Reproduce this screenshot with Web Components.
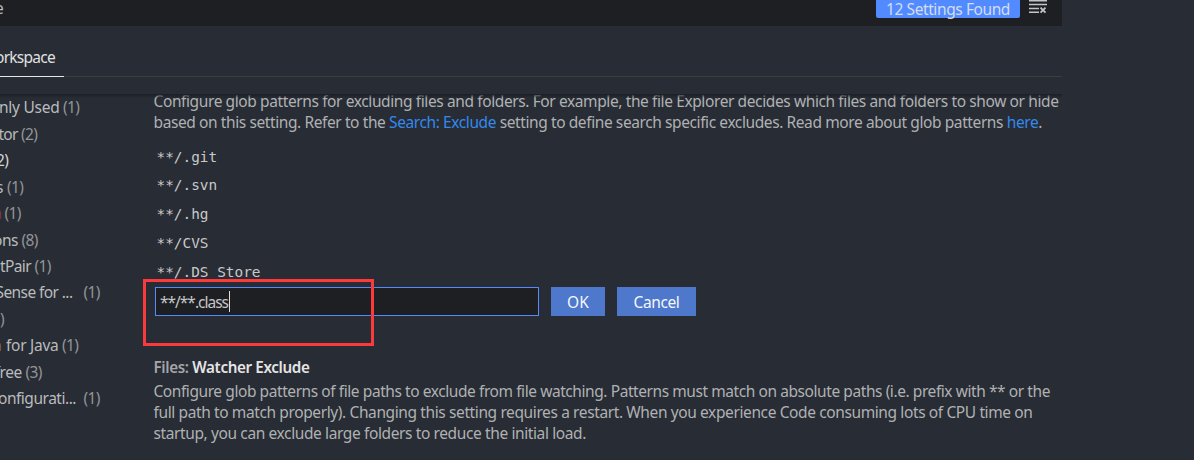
<!DOCTYPE html>
<html lang="en">
<head>
<meta charset="utf-8">
<title>Settings</title>
<style>
html,body{margin:0;height:100%;overflow:hidden;background:#282c34}
body{font:15.5px/21px "Noto Sans","Open Sans",sans-serif;color:#afb1b3}
</style>
</head>
<body>
<settings-editor></settings-editor>
<script>
function define(name, html, init) {
  const t = document.createElement('template');
  t.innerHTML = html;
  customElements.define(name, class extends HTMLElement {
    connectedCallback() {
      if (this.shadowRoot) return;
      this.attachShadow({mode: 'open'}).append(t.content.cloneNode(true));
      if (init) init.call(this, this.shadowRoot);
    }
  });
}

// One line of text, tracked to fill the width given in its attribute
define('text-run', `<style>:host{display:inline-block;white-space:nowrap;flex:none}</style><slot></slot>`, function () {
  const target = parseFloat(this.getAttribute('width'));
  const natural = this.getBoundingClientRect().width;
  if (target && natural) this.style.letterSpacing = ((target - natural) / this.textContent.length).toFixed(4) + 'px';
});

define('search-bar', `<style>
:host{display:flex;height:26px;background:#1d1f23;align-items:flex-start;color:#bbbdc0}
.query{flex:1;margin:-2px 0 0 -5px}
.badge{box-sizing:border-box;width:144px;height:18px;background:#528bff;color:#d3dcf0;border-radius:0 0 2px 2px;padding-left:10px;line-height:18px}
svg{margin:0 15px 0 9px;display:block}
</style>
<span class="query">e</span>
<span class="badge"><text-run width="124">12 Settings Found</text-run></span>
<svg width="18" height="14" viewBox="0 0 18 14" fill="none" stroke="#c5c5c5" stroke-width="1.5">
<path d="M0 .8h18M0 4.6h18M0 8.4h10M0 12.3h10"/><path stroke-width="1.8" d="M11.5 7.6l5 5M16.5 7.6l-5 5"/></svg>`);

define('scope-tabs', `<style>
:host{display:flex;box-sizing:border-box;height:51px;border-bottom:1px solid #3c3d3d}
.tab{display:flex;box-sizing:border-box;width:64px;height:51px;justify-content:flex-end;padding:21px 9px 0 0;border-bottom:1px solid #e7e7e7;color:#e0e1e2}
</style><div class="tab"><text-run width="60">orkspace</text-run></div>`);

define('toc-row', `<style>
:host{display:flex;height:26.45px;line-height:26.45px;white-space:nowrap;color:#b9bbbd}
.label{display:flex;justify-content:flex-end;flex:none;box-sizing:border-box;width:var(--end)}
.count{color:var(--count,#929598);width:19px;flex:none}
</style><span class="label"><slot></slot></span><span class="count"><text-run></text-run></span>`, function (root) {
  this.style.setProperty('--end', this.getAttribute('end') + 'px');
  const c = root.querySelector('text-run');
  c.textContent = this.getAttribute('count');
  c.style.letterSpacing = '-.6px';
  c.style.marginLeft = this.getAttribute('gap') + 'px';
});

define('pattern-row', `<style>
:host{display:block;height:28.75px;line-height:29.5px;padding-left:3.5px;font-family:"DejaVu Sans Mono",monospace;font-size:14.4px;color:#c8c9ca;white-space:pre}
</style><slot></slot>`);

define('push-button', `<style>
:host{display:flex;align-items:center;justify-content:center;height:29px;background:#4d78cc;color:#f5f7fb;box-sizing:border-box;padding-top:2px}
</style><slot></slot>`);

define('pattern-editor', `<style>
:host{display:flex;gap:12px;position:relative;margin:.75px 0 0 2px}
.input{display:flex;align-items:center;box-sizing:border-box;width:384px;height:29px;border:1px solid #528bff;background:#1d1f23;color:#c5c6c7;padding-left:4px}
.input text-run{padding-top:2px}
.caret{width:1px;height:21px;background:#ddd;margin-left:1px}
.ok{width:54px}.cancel{width:79px}
.mark{position:absolute;left:-12px;top:-8px;width:231px;height:67px;box-sizing:border-box;border:3px solid #fd3a3b}
</style>
<div class="input"><text-run width="68">**/**.class</text-run><span class="caret"></span></div>
<push-button class="ok"><text-run width="22">OK</text-run></push-button>
<push-button class="cancel"><text-run width="46">Cancel</text-run></push-button>
<div class="mark"></div>`);

define('settings-toc', `<style>:host{display:block;padding-top:.4px}.r{color:#793746}.o{color:#b98533;margin-right:4.5px}</style>
<toc-row end="59.5" gap="3.5" count="(1)"><text-run width="60.5">nly Used</text-run></toc-row>
<toc-row end="17.5" gap="3.5" count="(2)"><text-run width="19">tor</text-run></toc-row>
<toc-row end="0" gap="-4" count="2)" style="--count:#d5d6d7"></toc-row>
<toc-row end="3.5" gap="3.5" count="(1)">s</toc-row>
<toc-row end="2" gap="2.5" count="(1)"><span class="r">n</span></toc-row>
<toc-row end="18" gap="3.5" count="(8)"><text-run width="25">ons</text-run></toc-row>
<toc-row end="31" gap="3.5" count="(1)"><text-run width="31">tPair</text-run></toc-row>
<toc-row end="72.5" gap="11" count="(1)"><text-run width="77">Sense for ...</text-run></toc-row>
<toc-row end="0" gap="0" count=")"></toc-row>
<toc-row end="58.5" gap="3.5" count="(1)"><span class="o">n</span><text-run width="52.5">for Java</text-run></toc-row>
<toc-row end="22" gap="3.5" count="(3)"><text-run width="30">Tree</text-run></toc-row>
<toc-row end="76" gap="7.5" count="(1)"><text-run width="78">onfigurati...</text-run></toc-row>`);

define('settings-list', `<style>
:host{display:block;padding-top:1px}
.lines{display:flex;flex-direction:column;align-items:flex-start;height:42px;padding-left:.5px}
.first{margin-top:-4px;margin-bottom:9.5px}
a{color:#3389ec}
h3{margin:41px 0 3px;padding-left:.5px;font-size:15.2px;line-height:21px;font-weight:600;color:#a4a6a8}
h3 b{font-weight:600;color:#e5e5e5}
</style>
<div class="lines first">
<text-run width="905">Configure glob patterns for excluding files and folders. For example, the file Explorer decides which files and folders to show or hide</text-run>
<text-run width="888.5">based on this setting. Refer to the <a>Search: Exclude</a> setting to define search specific excludes. Read more about glob patterns <a>here</a>.</text-run>
</div>
<pattern-row>**/.git</pattern-row><pattern-row>**/.svn</pattern-row><pattern-row>**/.hg</pattern-row><pattern-row>**/CVS</pattern-row><pattern-row>**/.DS Store</pattern-row>
<pattern-editor></pattern-editor>
<h3><text-run width="156">Files: <b>Watcher Exclude</b></text-run></h3>
<div class="lines">
<text-run width="896.5">Configure glob patterns of file paths to exclude from file watching. Patterns must match on absolute paths (i.e. prefix with ** or the</text-run>
<text-run width="879">full path to match properly). Changing this setting requires a restart. When you experience Code consuming lots of CPU time on</text-run>
<text-run width="432.5">startup, you can exclude large folders to reduce the initial load.</text-run>
</div>`);

define('settings-editor', `<style>
:host{display:flex;flex-direction:column;width:1062px;height:460px}
.body{position:relative;margin-top:17px;flex:1;display:grid;grid-template-columns:153px 1fr;min-height:0;overflow:hidden}
.body::after{content:"";position:absolute;left:0;right:0;top:0;height:4px;background:linear-gradient(#1c1f24,#1c1f2400)}
</style>
<search-bar></search-bar><scope-tabs></scope-tabs>
<div class="body"><settings-toc></settings-toc><settings-list></settings-list></div>`);
</script>
</body>
</html>
